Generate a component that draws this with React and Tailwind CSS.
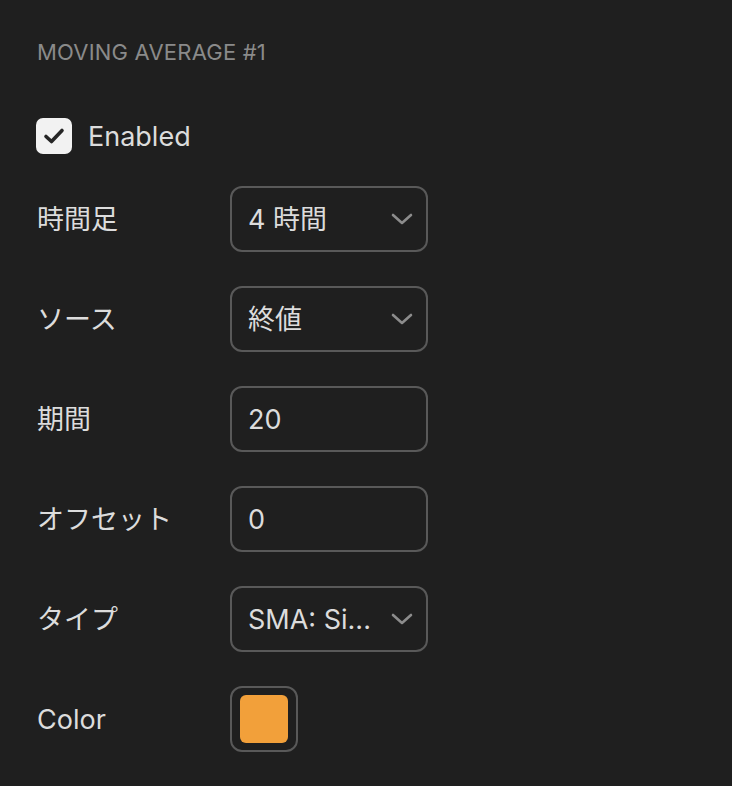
import React from "react";

const font = { fontFamily: '"Inter", "Noto Sans CJK JP", sans-serif' };

function Chevron() {
  return (
    <svg width="22" height="12" viewBox="0 0 22 12" fill="none">
      <path d="M2 2 L11 10 L20 2" stroke="#8c8c8c" strokeWidth="2.6" strokeLinecap="round" strokeLinejoin="round" />
    </svg>
  );
}

function Row({ label, children }) {
  return (
    <div className="flex items-center h-[66px]">
      <div className="w-[193px] text-[27px] text-[#dcdcdc] pt-[3px]">{label}</div>
      {children}
    </div>
  );
}

function Select({ value }) {
  return (
    <div className="w-[198px] h-[66px] border-2 border-[#595959] rounded-[12px] flex items-center justify-between pl-[16px] pr-[13px]">
      <span className="text-[27px] text-[#dcdcdc] pt-[3px]">{value}</span>
      <Chevron />
    </div>
  );
}

function Input({ value }) {
  return (
    <div className="w-[198px] h-[66px] border-2 border-[#595959] rounded-[12px] flex items-center pl-[16px]">
      <span className="text-[27px] text-[#dcdcdc] pt-[3px]">{value}</span>
    </div>
  );
}

export default function App() {
  return (
    <div className="w-[732px] h-[786px] bg-[#1f1f1f] pl-[37px] pt-[39px]" style={font}>
      <div className="text-[22px] leading-[26px] text-[#8a8a8a] tracking-[0.2px]">MOVING AVERAGE #1</div>
      <div className="flex items-center mt-[53px] h-[36px]">
        <div className="w-[36px] h-[36px] rounded-[7px] bg-[#f2f2f2] flex items-center justify-center -ml-[1px]">
          <svg width="36" height="36" viewBox="0 0 36 36" fill="none">
            <path d="M10 18.5 L15.5 23.5 L26 12.5" stroke="#262626" strokeWidth="3.6" strokeLinecap="round" strokeLinejoin="round" />
          </svg>
        </div>
        <span className="ml-[16px] text-[27px] text-[#dcdcdc] pt-[2px]">Enabled</span>
      </div>
      <div className="mt-[32px] flex flex-col gap-[34px]">
        <Row label="時間足"><Select value="4 時間" /></Row>
        <Row label="ソース"><Select value="終値" /></Row>
        <Row label="期間"><Input value="20" /></Row>
        <Row label="オフセット"><Input value="0" /></Row>
        <Row label="タイプ"><Select value="SMA: Si..." /></Row>
        <Row label="Color">
          <div className="w-[68px] h-[66px] border-2 border-[#595959] rounded-[12px] flex items-center justify-center">
            <div className="w-[48px] h-[48px] rounded-[6px] bg-[#f2a03a]" />
          </div>
        </Row>
      </div>
    </div>
  );
}
